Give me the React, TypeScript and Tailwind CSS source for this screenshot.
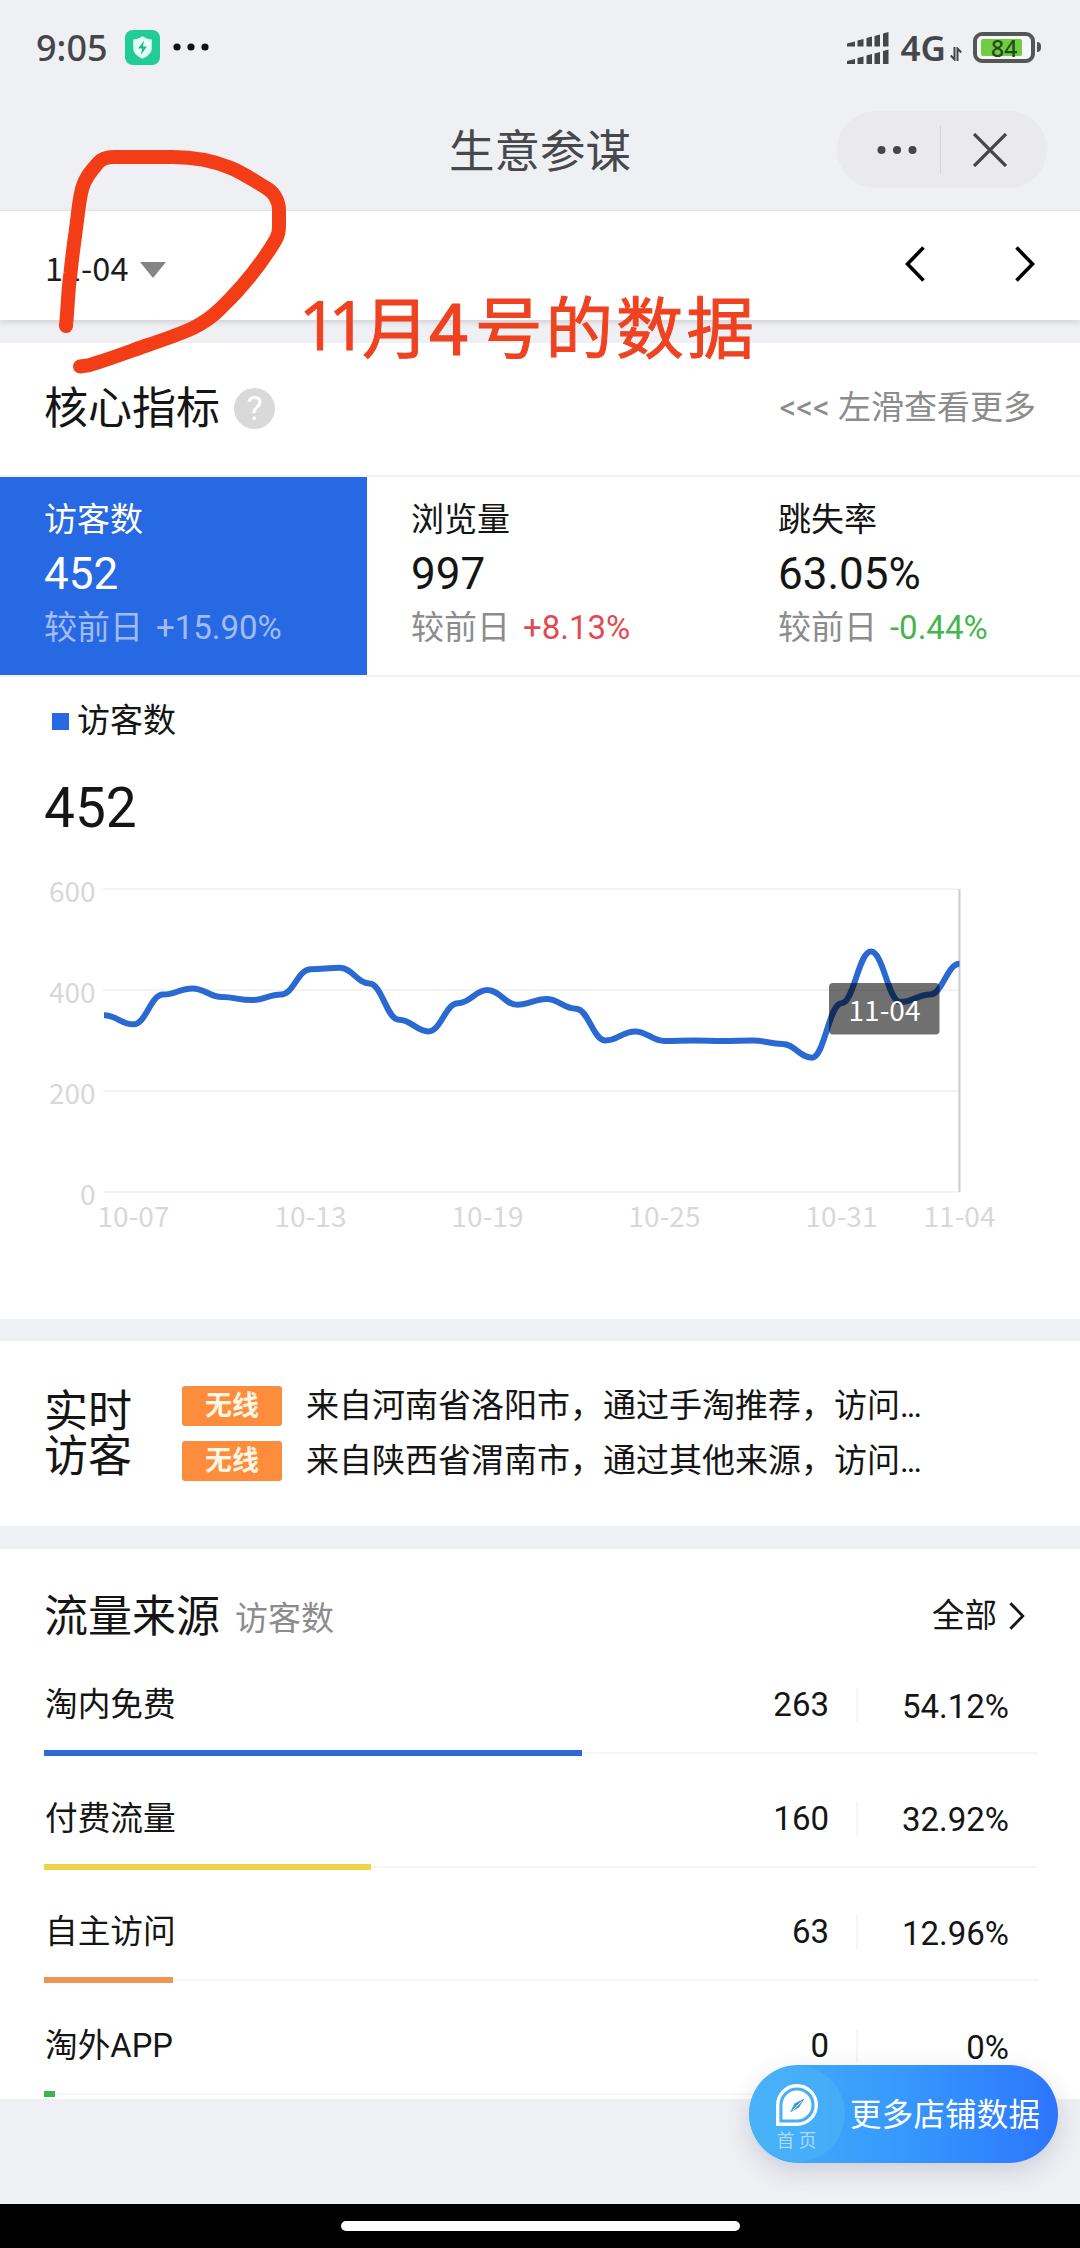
import type { ReactNode } from 'react';

interface Metric {
  label: string;
  value: string;
  change: string;
  active?: boolean;
}

interface Source {
  name: string;
  visitors: number;
  share: string;
  width: string;
  color: string;
}

const metrics: Metric[] = [
  { label: '访客数', value: '452', change: '+15.90%', active: true },
  { label: '浏览量', value: '997', change: '+8.13%' },
  { label: '跳失率', value: '63.05%', change: '-0.44%' },
];

const visits = [
  '来自河南省洛阳市，通过手淘推荐，访问',
  '来自陕西省渭南市，通过其他来源，访问',
];

const sources: Source[] = [
  { name: '淘内免费', visitors: 263, share: '54.12%', width: '54.12%', color: 'bg-[#2e69d6]' },
  { name: '付费流量', visitors: 160, share: '32.92%', width: '32.92%', color: 'bg-[#ecd548]' },
  { name: '自主访问', visitors: 63, share: '12.96%', width: '12.96%', color: 'bg-[#ee9450]' },
  { name: '淘外APP', visitors: 0, share: '0%', width: '11px', color: 'bg-[#3fb34f]' },
];

// visitors per day, 10-06 to 11-04
const daily = [
  350, 332, 391, 403, 386, 380, 391, 441, 444, 413, 341, 318, 374, 400, 371,
  382, 363, 300, 318, 299, 300, 299, 300, 293, 266, 374, 476, 376, 391, 452,
];

const LEFT = 104;
const BOTTOM = 323;
const STEP = 29.5;

const toX = (i: number) => LEFT + i * STEP;
const toY = (v: number) => BOTTOM - (v * 303) / 600;

function linePath(values: number[]) {
  const c = STEP * 0.42;
  return values
    .map((v, i) =>
      i === 0
        ? `M${toX(0)} ${toY(v)}`
        : `C${toX(i - 1) + c} ${toY(values[i - 1])} ${toX(i) - c} ${toY(v)} ${toX(i)} ${toY(v)}`
    )
    .join(' ');
}

const xLabels: [number, string][] = [
  [1, '10-07'],
  [7, '10-13'],
  [13, '10-19'],
  [19, '10-25'],
  [25, '10-31'],
  [29, '11-04'],
];

function Chevron({ left, className }: { left?: boolean; className: string }) {
  return (
    <svg viewBox="0 0 20 36" fill="none" stroke="currentColor" strokeWidth="3.6" className={className}>
      <path d={left ? 'M18.5 1.5 2.5 18l16 16.5' : 'M1.5 1.5 17.5 18l-16 16.5'} />
    </svg>
  );
}

function StatusBar() {
  return (
    <div className="flex h-[94px] items-center pr-[39px] pl-[36px] text-[#45464a]">
      <span className="w-[89px] pt-[2px] font-['Noto_Sans'] text-[36px] leading-none font-medium">9:05</span>
      <svg viewBox="0 0 36 36" className="h-[35px] w-[35px]">
        <rect width="36" height="36" rx="8" fill="#22cd95" />
        <path d="M18 6.5c3 2.2 6 3 9.500 3.300V19c0 4.500-4 8-9.500 10.500C12.500 27 8.500 23.500 8.500 19V9.800C12 9.500 15 8.700 18 6.500Z" fill="#e6fff6" />
        <path d="M19.500 11 13.500 19h4l-1 6.500 6-8.500h-4l1-6Z" fill="#22b987" />
      </svg>
      <svg viewBox="0 0 36 8" className="ml-[13px] h-2 w-9" fill="#111">
        <circle cx="4" cy="4" r="3.600" />
        <circle cx="18" cy="4" r="3.600" />
        <circle cx="32" cy="4" r="3.600" />
      </svg>
      <svg viewBox="0 0 42 32" className="mt-[2px] ml-auto h-8 w-[42px]" fill="#45464a">
        {[0, 17.5].map(y => (
          <g key={y}>
            <path d={`M0 ${y + 14.5}v-3l8-2v5Z`} />
            <path d={`M10.500 ${y + 14.5}v-6l6-1.500v7.500Z`} />
            <path d={`M19.500 ${y + 14.5}v-8.500l5.500-1.500v10Z`} />
            <path d={`M27.500 ${y + 14.5}v-10.500l5.500-1.500v12Z`} />
            <path d={`M36 ${y + 14.5}v-13l5.500-1.500v14.500Z`} />
          </g>
        ))}
      </svg>
      <span className="ml-[12px] font-['Noto_Sans'] text-[35px] leading-none font-semibold">4G</span>
      <svg viewBox="0 0 12 14" className="mt-[14px] ml-[4px] h-[14px] w-3" fill="none" stroke="#45464a" strokeWidth="2">
        <path d="M4.500 0v12.500L.8 8.500M7.500 14V1.500l3.700 4" />
      </svg>
      <div className="relative ml-[11px] flex h-[31px] w-[62px] items-center rounded-[9px] border-4 border-[#55565a] bg-[#f4f7f4] pl-1">
        <div className="h-[17px] w-[41px] rounded-[2px] bg-[#70cc42]" />
        <span className="absolute top-[1px] left-[14px] font-['Noto_Sans'] text-[23px] leading-none font-medium text-[#234b17]">84</span>
      </div>
      <div className="ml-[2px] h-[10px] w-1 rounded-r bg-[#55565a]" />
    </div>
  );
}

function TitleBar() {
  return (
    <div className="grid h-[117px] grid-cols-3 items-start border-b border-[#e9eaec] pr-[33px]">
      <div />
      <h1 className="mt-[23px] ml-[33px] text-center text-[45.5px] leading-[72px] whitespace-nowrap text-[#47484c]">生意参谋</h1>
      <div className="mt-[17px] flex h-[77px] w-[210px] items-center justify-self-end rounded-full bg-[#e9e9ee] text-[#45464a]">
        <svg viewBox="0 0 40 8" className="ml-[40px] h-2 w-10" fill="currentColor">
          <circle cx="4.500" cy="4" r="4" />
          <circle cx="20" cy="4" r="4" />
          <circle cx="35.500" cy="4" r="4" />
        </svg>
        <div className="ml-[23px] h-12 w-px bg-[#d3d3d8]" />
        <svg viewBox="0 0 34 34" className="ml-[32px] h-[34px] w-[34px]" fill="none" stroke="currentColor" strokeWidth="3.300">
          <path d="M1 1l32 32M33 1 1 33" />
        </svg>
      </div>
    </div>
  );
}

function DateBar() {
  return (
    <div className="relative z-10 flex h-[109px] items-center bg-white pr-[45px] pl-[45px] shadow-[0_2px_6px_rgba(0,0,0,0.14)]">
      <button className="flex items-center pt-[3px] font-['Noto_Sans_CJK_SC',sans-serif] text-[32.5px] leading-[48px] text-[#1c1c1c]">
        11-04
        <svg viewBox="0 0 26 16" className="mt-[6px] ml-3 h-4 w-[26px]" fill="#858585">
          <path d="M0 0h26L13 16Z" />
        </svg>
      </button>
      <Chevron left className="mr-[90px] mb-[3px] ml-auto h-9 w-5" />
      <Chevron className="mb-[3px] h-9 w-5" />
    </div>
  );
}

function MetricCard({ metric }: { metric: Metric }) {
  const tone = metric.active
    ? 'text-[#a1bcf4]'
    : metric.change.startsWith('+')
      ? 'text-[#df4b50]'
      : 'text-[#46b54c]';
  return (
    <div className={`h-[198px] w-[367px] shrink-0 pt-[21px] pl-[44px] ${metric.active ? 'bg-[#2769e3] text-white' : 'text-[#151515]'}`}>
      <div className="text-[33px] leading-[44px]">{metric.label}</div>
      <div className="text-[44px] leading-[64px]">{metric.value}</div>
      <div className="flex gap-[13px] text-[33px] leading-[44px]">
        <span className={metric.active ? 'text-[#a1bcf4]' : 'text-[#8c8c8c]'}>较前日</span>
        <span className={tone}>{metric.change}</span>
      </div>
    </div>
  );
}

function VisitorChart() {
  return (
    <svg viewBox="0 0 1080 450" className="block h-[450px] w-full shrink-0 font-['Noto_Sans_CJK_SC',sans-serif] text-[28px]">
      {[600, 400, 200, 0].map(v => (
        <g key={v}>
          <line x1="103" x2="959" y1={toY(v)} y2={toY(v)} stroke="#f3f3f3" strokeWidth="2" />
          <text x="95.500" y={toY(v) + 12.5} textAnchor="end" fill="#d8d8d8">{v}</text>
        </g>
      ))}
      {xLabels.map(([i, label]) => (
        <text key={label} x={toX(i)} y="357.500" textAnchor="middle" fill="#d8d8d8">{label}</text>
      ))}
      <line x1="959.500" x2="959.500" y1="20" y2="323" stroke="#cbcbcb" strokeWidth="2" />
      <path d={linePath(daily)} fill="none" stroke="#2b69d2" strokeWidth="6" />
      <rect x="829" y="114" width="110.500" height="51.500" rx="4" fill="#000" fillOpacity="0.560" />
      <text x="884.500" y="152" textAnchor="middle" fill="#fff">11-04</text>
    </svg>
  );
}

function Section({ className, children }: { className: string; children: ReactNode }) {
  return <section className={`bg-white text-[#151515] ${className}`}>{children}</section>;
}

function SourceRow({ source }: { source: Source }) {
  return (
    <div className="h-[113.700px]">
      <div className="flex h-[73px] items-center pt-[3px] pr-[29px] text-[33px] leading-[44px]">
        <span className="pl-px text-[32.700px]">{source.name}</span>
        <span className="ml-auto">{source.visitors}</span>
        <span className="ml-[27px] h-[34px] w-[2px] bg-[#f5f5f5]" />
        <span className="w-[151px] pt-[3px] text-right">{source.share}</span>
      </div>
      <div className="mt-[10px] flex h-[6px] items-center">
        <div className={`h-[6px] ${source.color}`} style={{ width: source.width }} />
        <div className="h-[2px] flex-1 bg-[#f6f6f6]" />
      </div>
    </div>
  );
}

function MoreButton() {
  return (
    <button className="absolute top-[2065px] left-[749px] flex h-[98px] w-[309px] items-center rounded-full bg-linear-to-r from-[#42b1f8] via-[#3798fd] to-[#2d75fc] text-white shadow-[0_8px_24px_rgba(60,70,110,0.2)]">
      <span className="flex h-[96px] w-[96px] flex-col items-center rounded-full bg-[#4cb2f7]/60 pt-[18px]">
        <svg viewBox="0 0 42 42" className="h-[42px] w-[42px] shrink-0">
          <path d="M1.700 40.300V21A19.300 19.300 0 1 1 21 40.300Z" fill="none" stroke="#fff" strokeWidth="3.400" />
          <path d="M6.500 35.500V21A14.500 14.500 0 1 1 21 35.500Z" fill="#fff" />
          <path d="M28.500 14.500 23 23.500 14 28.500 18.500 19.500Z" fill="#3f9bd8" />
          <path d="M25.500 17.500 17 26" stroke="#fff" strokeWidth="1" />
        </svg>
        <span className="mt-[5px] pl-[3px] text-[18px] leading-[20px] tracking-[4px] text-[#a9dcfb]">首页</span>
      </span>
      <span className="mt-[3px] ml-[5px] text-[31.500px] tracking-[0.200px] whitespace-nowrap">更多店铺数据</span>
    </button>
  );
}

// hand-drawn mark round the date, plus its note
function Annotation() {
  return (
    <>
      <svg viewBox="0 0 300 390" className="pointer-events-none absolute top-0 left-0 z-20 h-[390px] w-[300px]">
        <path
          d="M66 326C68 305 68 290 70.500 273C73 248 75 238 77.500 217C79 205 80 195 82.600 187C86 176 92 170 98 163C102 158 108 157 114 157H172C195 157 212 160 231 168C245 174 258 183 268 189C275 194 279 202 279 210V227C279 236 275 241 270 249C255 272 240 290 220 309C212 317 203 323 193 328C180 334 163 340 145 346C128 352 112 358 96 363C91 365 86 366 80 366.500"
          fill="none"
          stroke="#f33d16"
          strokeWidth="14"
          strokeLinecap="round"
          strokeLinejoin="round"
        />
      </svg>
      <div className="pointer-events-none absolute top-[274px] left-[299px] z-20 flex font-['Noto_Sans_CJK_SC',sans-serif] text-[67.500px] leading-[100px] text-[#ee4220] [-webkit-text-stroke:1px_#ee4220]">
        <span className="w-[63px] font-['Open_Sans'] tracking-[-9px]">11</span>
        <span className="w-[67px]">月</span>
        <span className="w-[46px] text-[72px]">4</span>
        <span className="tracking-[3px]">号的数据</span>
      </div>
    </>
  );
}

export default function App() {
  return (
    <div className="relative flex h-[2248px] w-[1080px] flex-col overflow-hidden bg-[#eff0f4] font-[Roboto,'Noto_Sans_CJK_SC',sans-serif]">
      <StatusBar />
      <TitleBar />
      <DateBar />

      <Section className="mt-[23px] h-[976px]">
        <div className="flex h-[134px] items-center border-b-2 border-[#f3f3f4] pr-[44px] pl-[44px]">
          <h2 className="text-[44px] leading-[60px]">核心指标</h2>
          <span className="mb-[2px] ml-[14px] flex h-[41px] w-[41px] items-center justify-center rounded-full bg-[#d9d9d9] text-[34px] leading-none text-white">?</span>
          <span className="mb-[2px] ml-auto text-[33px] text-[#8c8c8c]">{'<<< 左滑查看更多'}</span>
        </div>
        <div className="flex h-[200px] overflow-hidden border-b-2 border-[#f3f3f4]">
          {metrics.map(m => (
            <MetricCard key={m.label} metric={m} />
          ))}
        </div>
        <div className="mt-[22px] flex h-[44px] items-center pl-[52px] text-[33px]">
          <span className="mr-[8px] h-[17px] w-[17px] bg-[#2769e3]" />
          访客数
        </div>
        <div className="mt-[32px] h-[94px] pl-[44px] text-[55px] leading-[66px]">452</div>
        <VisitorChart />
      </Section>

      <Section className="mt-[22px] flex h-[185px] pt-[45px] pl-[44px]">
        <h2 className="mt-[4px] w-[138px] text-[44px] leading-[45px]">
          实时
          <br />
          访客
        </h2>
        <div className="flex flex-col gap-[15px]">
          {visits.map(v => (
            <div key={v} className="flex h-10 items-center">
              <span className="flex h-10 w-[100px] items-center justify-center rounded-[3px] bg-[#fd8c3c] text-[27px] font-bold text-[#fff6e4]">无线</span>
              <span className="ml-[24px] pb-[1px] text-[33px] leading-[40px]">
                {v}
                <span className="tracking-[-2px]">...</span>
              </span>
            </div>
          ))}
        </div>
      </Section>

      <Section className="mt-[23px] h-[550px] pr-[42px] pl-[44px]">
        <div className="flex h-[118px] items-center pt-[17px]">
          <h2 className="text-[44px]">流量来源</h2>
          <span className="mt-[4px] ml-[15px] text-[33px] text-[#8c8c8c]">访客数</span>
          <span className="mr-[12px] ml-auto text-[32.500px]">全部</span>
          <Chevron className="mr-[13px] mb-[2px] h-[28px] w-4" />
        </div>
        {sources.map(s => (
          <SourceRow key={s.name} source={s} />
        ))}
      </Section>

      <div className="mt-auto flex h-[44px] shrink-0 justify-center bg-black pt-[17px]">
        <div className="h-[10px] w-[399px] rounded-full bg-white" />
      </div>

      <MoreButton />
      <Annotation />
    </div>
  );
}
